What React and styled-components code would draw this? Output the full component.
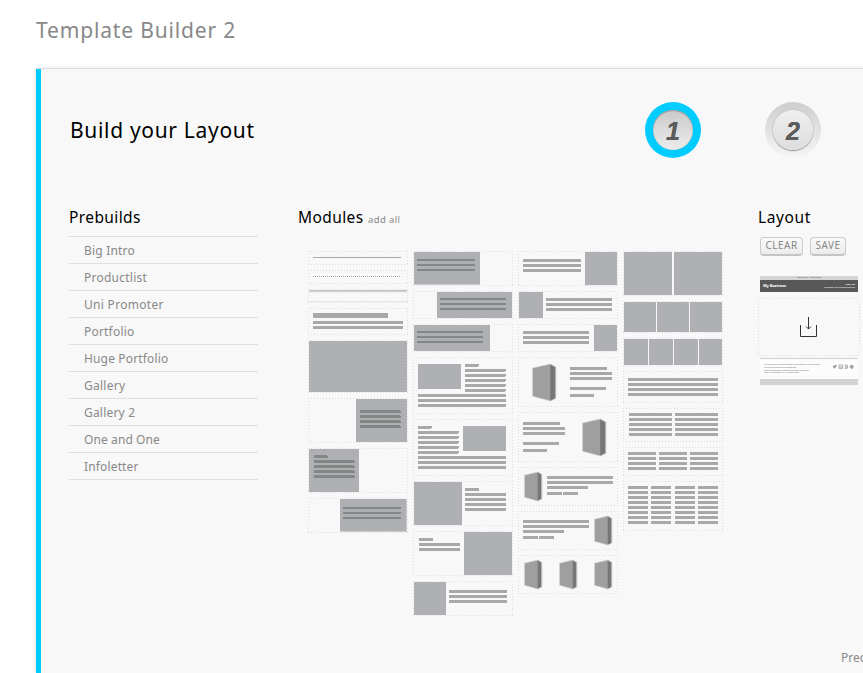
import React from "react";
import styled, { createGlobalStyle } from "styled-components";

const Global = createGlobalStyle`
  * { box-sizing: border-box; }
  html, body { margin: 0; background: #fff; overflow: hidden; }
  body { font-family: "Noto Sans", "Open Sans", sans-serif; color: #888; }
  h1, h2, h3, ul { margin: 0; padding: 0; font-weight: 400; }
`;

const Page = styled.div`
  width: 863px;
  height: 673px;
  padding-left: 36px;
  overflow: hidden;
  display: flex;
  flex-direction: column;
`;

const PageTitle = styled.h1`
  height: 68px;
  flex: none;
  padding-top: 15px;
  font-size: 21px;
  line-height: 30px;
  letter-spacing: 0.84px;
  color: #888;
`;

const Panel = styled.main`
  flex: 1;
  width: 900px;
  background: #f8f8f8;
  border-left: 5px solid #00ccff;
  box-shadow: 0 -1px 0 #dcdcdc, 0 0 5px rgba(0, 0, 0, 0.15);
  margin-top: 1px;
  display: flex;
  flex-direction: column;
`;

const PanelHead = styled.header`
  display: flex;
  height: 139px;
  padding: 33px 0 0 29px;
`;

const PanelTitle = styled.h2`
  width: 575px;
  padding-top: 13px;
  font-size: 21px;
  line-height: 30px;
  letter-spacing: 0.68px;
  color: #000;
`;

const Steps = styled.div`
  display: flex;
  gap: 64px;
`;

const Columns = styled.div`
  display: flex;
  height: 434px;
  padding-left: 28px;
`;

const Prebuilds = styled.section`
  width: 189px;
  margin-right: 40px;
`;

const Modules = styled.section`
  width: 425px;
  margin-right: 35px;
`;

const Layout = styled.section`
  width: 102px;
`;

const SectionTitle = styled.h3`
  height: 28px;
  font-size: 15.5px;
  line-height: 19px;
  letter-spacing: ${(p) => p.$spacing || "0.4px"};
  color: #000;
`;

const AddAll = styled.a`
  font-size: 9.5px;
  letter-spacing: 0.4px;
  color: #888;
`;

const List = styled.ul`
  list-style: none;
  border-top: 1px solid #dfdfdf;
`;

const ListItem = styled.li`
  height: 27px;
  padding-left: 15px;
  border-bottom: 1px solid #dfdfdf;
  font-size: 12px;
  line-height: 27px;
  letter-spacing: ${(p) => p.$spacing};
`;

const ModuleGrid = styled.div`
  display: flex;
  gap: 5px;
  padding: 15px 0 0 10px;
`;

const ModuleColumn = styled.div`
  display: flex;
  flex-direction: column;
  gap: 5px;
  width: 100px;
  svg { display: block; flex: none; }
`;

const ButtonRow = styled.div`
  display: flex;
  gap: 7px;
  padding: 1px 0 0 2px;
`;

const Button = styled.button`
  width: ${(p) => p.$width};
  height: 19px;
  padding: 0 0 2px;
  border: 1px solid #cbcbcb;
  border-bottom: 2px solid #c4c4c4;
  border-radius: 4px;
  background: linear-gradient(#fafafa, #ececec);
  font: 10px/14px "Noto Sans", sans-serif;
  letter-spacing: 0.5px;
  color: #888;
`;

const Preview = styled.div`
  margin-top: 20px;
  display: flex;
  flex-direction: column;
  svg { display: block; }
`;

const Banner = styled.div`
  width: 98px;
  height: 16px;
  margin: 0 0 6px 2px;
  background: #585858;
`;

const BannerTop = styled.div`
  height: 4px;
  background: #d5d5d5;
  font-size: 2px;
  line-height: 4px;
  text-align: center;
  color: #555;
`;

const BannerBody = styled.div`
  display: flex;
  justify-content: space-between;
  align-items: center;
  height: 12px;
  padding: 0 3px;
  color: #fff;
`;

const Brand = styled.b`
  font-size: 4px;
  line-height: 12px;
  letter-spacing: -0.15px;
`;

const Issue = styled.div`
  font-size: 2px;
  line-height: 3px;
  text-align: right;
`;

const Footer = styled.div`
  display: flex;
  justify-content: space-between;
  width: 98px;
  height: 27px;
  margin: 2px 0 0 2px;
  padding: 5px 4px 0;
  border-top: 1px solid #cfcfcf;
  border-bottom: 6px solid #d3d3d3;
  background: #fcfcfc;
`;

const FinePrint = styled.div`
  width: 60px;
  font-size: 1.9px;
  line-height: 2.8px;
  letter-spacing: -0.12px;
  white-space: nowrap;
  color: #777;
`;

const NextLink = styled.div`
  padding-left: 800px;
  margin-top: 6px;
  font-size: 12px;
  line-height: 20px;
  white-space: nowrap;
`;

const PIC = "#afb0b4";
const LINE = "#a8a8a8";
const DARK = "#858686";

const pic = (x, y, w, h) => [x, y, w, h, PIC];
const line = (x, y, w, h = 3) => [x, y, w, h, LINE];
const dark = (x, y, w, h = 2) => [x, y, w, h, DARK];
const notched = (x, y, w, c = LINE) => [[x, y, w, 3, c], [x + w, y + 1, 1, 2, c]];
const notchedTop = (x, y, w) => [[x, y, w, 3, LINE], [x + w, y, 1, 2, LINE]];
const stack = (x, y, w, n, h = 3, make = line) =>
  Array.from({ length: n }, (_, i) => make(x, y + i * 5, w, h));
const each = (ys, fn) => ys.flatMap(fn);

const modules = [
  [
    { h: 14, r: [line(5, 6, 88, 1)] },
    { h: 14, r: Array.from({ length: 44 }, (_, i) => line(5 + i * 2, 6, 1, 1)) },
    { h: 14, r: [[1, 1, 98, 1, "#c0c0c0"], [1, 2, 98, 1, "#d4d4d4"], [1, 3, 98, 1, "#efefef"], [1, 12, 98, 1, "#e6e6e6"]] },
    { h: 27, r: [line(5, 5, 75, 5), ...stack(5, 13, 90, 2)] },
    { h: 53, r: [pic(1, 1, 98, 51)] },
    { h: 45, r: [pic(48, 1, 51, 43), ...each([12, 17, 22, 27], (y) => notched(52, y, 40, DARK))] },
    { h: 45, r: [pic(1, 1, 50, 43), ...notched(6, 7, 13, DARK), ...each([12, 17, 22, 27], (y) => notched(6, y, 40, DARK))] },
    { h: 35, r: [[32, 1, 67, 33, "#cbcccd"], pic(32, 1, 66, 32), ...stack(35, 9, 58, 3, 2, dark)] },
  ],
  [
    { h: 35, r: [[1, 1, 66, 33, "#cbcccd"], pic(1, 1, 66, 32), ...stack(4, 8, 58, 3, 2, dark)] },
    { h: 28, r: [pic(24, 1, 75, 26), ...stack(27, 7, 66, 3, 2, dark)] },
    { h: 28, r: [pic(1, 1, 76, 26), ...stack(4, 7, 66, 3, 2, dark)] },
    { h: 57, r: [pic(5, 7, 43, 25), ...notchedTop(52, 7, 13), ...each([12, 17, 22, 27, 32], (y) => notchedTop(52, y, 40)), ...stack(5, 37, 88, 3)] },
    { h: 57, r: [...notchedTop(5, 7, 13), ...each([12, 17, 22, 27, 32], (y) => notchedTop(5, y, 40)), pic(50, 7, 43, 25), ...stack(5, 37, 88, 3)] },
    { h: 45, r: [pic(1, 1, 48, 43), line(52, 7, 14), ...stack(52, 12, 41, 4)] },
    { h: 45, r: [line(6, 7, 14), ...stack(6, 12, 41, 2), pic(51, 1, 48, 43)] },
    { h: 35, r: [pic(1, 1, 32, 33), ...stack(36, 9, 58, 3)] },
  ],
  [
    { h: 35, r: [...stack(5, 8, 58, 3), pic(67, 1, 32, 33)] },
    { h: 28, r: [pic(1, 1, 24, 26), ...stack(28, 7, 66, 3)] },
    { h: 28, r: [...stack(5, 7, 66, 3), pic(76, 1, 23, 26)] },
    { h: 50, r: [line(52, 10, 37), ...stack(52, 15, 42, 2), line(52, 30, 36), line(52, 37, 24)], b: [[14, 7, 24, 37]] },
    { h: 50, r: [line(5, 10, 37), ...stack(5, 15, 42, 2), line(5, 30, 36), line(5, 37, 24)], b: [[64, 7, 24, 37]] },
    { h: 39, r: [...stack(29, 9, 66, 2), line(29, 19, 41), line(29, 25, 15), line(45, 25, 15)], b: [[6, 5, 18, 29]] },
    { h: 39, r: [...stack(5, 9, 66, 2), line(5, 19, 41), line(5, 25, 15), line(21, 25, 15)], b: [[76, 5, 18, 29]] },
    { h: 39, r: [], b: [[6, 5, 18, 29], [41, 5, 18, 29], [76, 5, 18, 29]] },
  ],
  [
    { h: 45, r: [pic(1, 1, 48, 43), pic(51, 1, 48, 43)] },
    { h: 32, r: [1, 34, 67].map((x) => pic(x, 1, 32, 30)) },
    { h: 28, r: [pic(1, 1, 24, 26), pic(26, 1, 24, 26), pic(51, 1, 24, 26), pic(76, 1, 23, 26)] },
    { h: 32, r: stack(5, 7, 90, 4) },
    { h: 34, r: [...stack(6, 5, 43, 5), ...stack(52, 5, 43, 5)] },
    { h: 29, r: each([5, 36, 67], (x) => stack(x, 5, 28, 4)) },
    { h: 50, r: each([5, 28, 52, 75], (x) => stack(x, 5, 20, 8)) },
  ],
];

function ProductBox({ box: [x, y, w, h] }) {
  const fold = x + w * 0.76;
  return (
    <g>
      <polygon
        points={`${x + 0.5},${y + h * 0.11} ${fold},${y} ${x + w},${y + h * 0.08} ${x + w},${y + h * 0.93} ${fold},${y + h} ${x + 0.5},${y + h * 0.87}`}
        fill="#a2a2a2" stroke="#d2d2d2" strokeWidth="0.8"
      />
      <polygon points={`${x + 1},${y + h * 0.13} ${fold},${y + 1.3} ${fold},${y + h - 1} ${x + 1},${y + h * 0.86}`} fill="#9f9f9f" />
      <polygon points={`${fold},${y + 0.5} ${x + w - 1},${y + h * 0.09} ${x + w - 1},${y + h * 0.92} ${fold},${y + h - 0.3}`} fill="#777" />
    </g>
  );
}

function ModuleThumb({ h, r, b = [] }) {
  return (
    <svg width="100" height={h} viewBox={`0 0 100 ${h}`}>
      <g stroke="#dedede" strokeDasharray="1 2" fill="none">
        <path d={`M0 .5H100M0 ${h - 0.5}H100M.5 3V${h - 1}M99.5 3V${h - 1}`} />
      </g>
      <g shapeRendering="crispEdges">
        {r.map(([x, y, w, ht, fill], i) => (
          <rect key={i} x={x} y={y} width={w} height={ht} fill={fill} />
        ))}
      </g>
      {b.map((box, i) => <ProductBox key={i} box={box} />)}
    </svg>
  );
}

const StepRing = styled.div`
  display: flex;
  align-items: center;
  justify-content: center;
  width: 56px;
  height: 56px;
  border-radius: 50%;
  background: ${(p) => (p.$active ? "#00ccff" : "linear-gradient(#cdcdcd, #f6f6f6)")};
`;

const StepFace = styled.div`
  width: 40px;
  height: 40px;
  border-radius: 50%;
  background: ${(p) => (p.$active ? "linear-gradient(#cacaca, #ececec)" : "linear-gradient(#efefef, #dddddd)")};
  box-shadow: ${(p) => (p.$active ? "inset 0 1px 1px #999, inset 0 0 1px #aaa" : "0 1px 1px #999, 0 0 2px #b4b4b4")};
  font: italic bold 25px/42px "Liberation Sans", Arial, sans-serif;
  text-align: center;
  color: #5c5c5c;
  text-shadow: 0 -0.5px 0 #444;
`;

const prebuilds = [
  ["Big Intro", "0.2px"],
  ["Productlist", "0.25px"],
  ["Uni Promoter", "0.3px"],
  ["Portfolio", "0.2px"],
  ["Huge Portfolio", "0.15px"],
  ["Gallery", "0.25px"],
  ["Gallery 2", "0.2px"],
  ["One and One", "0.1px"],
  ["Infoletter", "0.15px"],
];

function DropZone() {
  return (
    <svg width="102" height="58">
      <path d="M0 .5H102M0 57.5H102M.5 3V57M101.5 3V57" stroke="#dcdcdc" strokeDasharray="1 2" fill="none" />
      <path d="M42.5 27V38.5H58.5V27M50.5 19V31M48 28.5L50.5 31L53 28.5" stroke="#333" fill="none" />
    </svg>
  );
}

function SocialIcons() {
  return (
    <svg width="21" height="6" fill="none" stroke="#999" strokeWidth=".7">
      <path d="M0 1.5L1.2 2.3L2.4 1L3.4 1.6L2.4 3.6L.5 4" fill="#999" />
      <rect x="6" y="1" width="3.5" height="3.5" /><path d="M7 2V4M8.5 2.5V4" />
      <circle cx="13" cy="2.2" r="1.3" /><path d="M11.6 4.4H14.5M14.4 1V4" />
      <circle cx="18.7" cy="2.8" r="1.6" fill="#aaa" /><path d="M18.7 1V4.8" />
    </svg>
  );
}

export default function App() {
  return (
    <>
      <Global />
      <Page>
        <PageTitle>Template Builder 2</PageTitle>
        <Panel>
          <PanelHead>
            <PanelTitle>Build your Layout</PanelTitle>
            <Steps>
              <StepRing $active><StepFace $active>1</StepFace></StepRing>
              <StepRing><StepFace>2</StepFace></StepRing>
            </Steps>
          </PanelHead>
          <Columns>
            <Prebuilds>
              <SectionTitle>Prebuilds</SectionTitle>
              <List>
                {prebuilds.map(([name, spacing]) => (
                  <ListItem key={name} $spacing={spacing}>{name}</ListItem>
                ))}
              </List>
            </Prebuilds>
            <Modules>
              <SectionTitle>Modules <AddAll>add all</AddAll></SectionTitle>
              <ModuleGrid>
                {modules.map((column, i) => (
                  <ModuleColumn key={i}>
                    {column.map((m, j) => <ModuleThumb key={j} {...m} />)}
                  </ModuleColumn>
                ))}
              </ModuleGrid>
            </Modules>
            <Layout>
              <SectionTitle $spacing="0.6px">Layout</SectionTitle>
              <ButtonRow>
                <Button $width="43px">CLEAR</Button>
                <Button $width="36px">SAVE</Button>
              </ButtonRow>
              <Preview>
                <Banner>
                  <BannerTop>View online | Unsubscribe</BannerTop>
                  <BannerBody>
                    <Brand>My Business</Brand>
                    <Issue><b>Issue #00</b><br />Newsletter with Template Builder</Issue>
                  </BannerBody>
                </Banner>
                <DropZone />
                <Footer>
                  <FinePrint>
                    You are receiving this email because you have signed up to My Business.<br />
                    Edit your subscription at mybusiness.com<br />
                    If you no longer wish to receive emails please unsubscribe<br />
                    ©2012 Your Company Inc, All rights reserved
                  </FinePrint>
                  <SocialIcons />
                </Footer>
              </Preview>
            </Layout>
          </Columns>
          <NextLink>Precheck</NextLink>
        </Panel>
      </Page>
    </>
  );
}
